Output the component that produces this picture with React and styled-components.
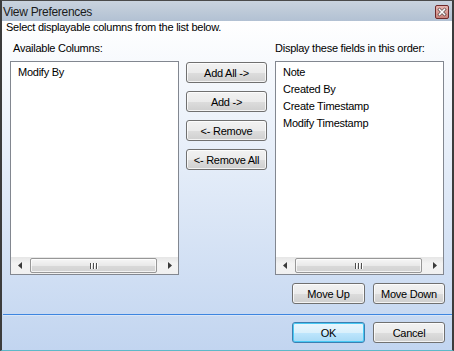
import React from 'react';
import styled, { createGlobalStyle } from 'styled-components';

const GlobalStyle = createGlobalStyle`
    body {
        margin: 0;
        font-family: "Liberation Sans", Arial, sans-serif;
    }
`;

const Window = styled.div`
    width: 454px;
    height: 351px;
    box-sizing: border-box;
    display: flex;
    flex-direction: column;
    border-top: 1px solid #4a4a4a;
    border-left: 2px solid #3c3c3c;
    border-right: 2px solid #3c3c3c;
    border-bottom: 1px solid #5fb8c8;
    box-shadow: inset -1px 0 0 #e8eef6, inset 0 -1px 0 #4a4a4a;
    font-size: 11px;
    letter-spacing: -0.25px;
    color: #000;
`;

const TitleBar = styled.div`
    height: 20px;
    flex: none;
    display: flex;
    align-items: center;
    justify-content: space-between;
    padding: 0 3px 0 1px;
    background: linear-gradient(#c9d3de, #b2c1d3);
`;

const Title = styled.span`
    font-size: 12px;
    letter-spacing: -0.3px;
    color: #1b1b1b;
    line-height: 14px;
    padding-top: 1px;
`;

const CloseButton = styled.div`
    width: 14px;
    height: 14px;
    display: flex;
    margin-top: 1px;
`;

const Body = styled.div`
    flex: 1;
    display: flex;
    flex-direction: column;
    background: linear-gradient(#ffffff, #c2d5f0);
`;

const Instruction = styled.div`
    line-height: 13px;
    padding-left: 4px;
`;

const Main = styled.div`
    display: grid;
    grid-template-columns: 169px 96px 169px;
    padding: 8px 0 0 8px;
`;

const Label = styled.div`
    line-height: 13px;
    padding-left: ${p => p.inset}px;
    margin-bottom: 6px;
    grid-row: 1;
    grid-column: ${p => p.col};
    white-space: nowrap;
`;

const ListBox = styled.div`
    grid-row: 2;
    grid-column: ${p => p.col};
    height: 214px;
    box-sizing: border-box;
    border: 1px solid #828790;
    background: #fff;
    display: flex;
    flex-direction: column;
`;

const Items = styled.div`
    flex: 1;
    padding: 2px 0 0 7px;
`;

const Item = styled.div`
    line-height: 17px;
    white-space: nowrap;
`;

const ScrollBar = styled.div`
    height: 17px;
    flex: none;
    display: flex;
    align-items: center;
    background: linear-gradient(#e6e6e6, #f3f3f3 40%, #f0f0f0);
`;

const Arrow = styled.div`
    width: 17px;
    height: 17px;
    display: flex;
    align-items: center;
    justify-content: center;
    flex: none;
`;

const Thumb = styled.div`
    flex: 1;
    height: 15px;
    margin: 0 4px 0 2px;
    box-sizing: border-box;
    border: 1px solid #979797;
    border-radius: 2px;
    background: linear-gradient(#f6f6f6, #e9e9e9 50%, #d9d9d9 51%, #d2d2d2);
    box-shadow: inset 0 0 0 1px rgba(255, 255, 255, 0.7);
    display: flex;
    align-items: center;
    justify-content: center;
    gap: 1px;
`;

const Grip = styled.span`
    width: 1px;
    height: 6px;
    background: #4d4d4d;
    border-right: 1px solid #fff;
`;

const ButtonColumn = styled.div`
    grid-row: 2;
    grid-column: 2;
    display: flex;
    flex-direction: column;
    gap: 8px;
    padding: 1px 8px 0 7px;
`;

const Button = styled.button`
    width: ${p => p.w || 81}px;
    height: 21px;
    box-sizing: border-box;
    padding: 0;
    margin: 0;
    font-family: inherit;
    font-size: 11px;
    letter-spacing: -0.25px;
    color: #000;
    border: 1px solid ${p => (p.primary ? '#3c7fb1' : '#707070')};
    border-radius: 3px;
    background: ${p =>
        p.primary
            ? 'linear-gradient(#eaf6fd, #d9f0fc 50%, #bee6fd 51%, #a7d9f5)'
            : 'linear-gradient(#f2f2f2, #ebebeb 50%, #dddddd 51%, #cfcfcf)'};
    box-shadow: inset 0 0 0 1px ${p => (p.primary ? '#48c9f4' : 'rgba(255,255,255,0.75)')};
    flex: none;
`;

const ActionRow = styled.div`
    grid-row: 3;
    grid-column: 3;
    display: flex;
    justify-content: flex-end;
    gap: 8px;
    margin: 8px -1px 0 0;
`;

const Separator = styled.div`
    height: 1px;
    margin: 10px 0 0 1px;
    background: #3d85e0;
    border-bottom: 1px solid #d8e6f8;
`;

const Footer = styled.div`
    display: flex;
    justify-content: flex-end;
    gap: 8px;
    padding: 6px 7px 0 0;
`;

const LeftTri = () => (
    <svg width="4" height="7" viewBox="0 0 4 7">
        <path d="M4 0 L0 3.5 L4 7 Z" fill="#3a3a3a" />
    </svg>
);

const RightTri = () => (
    <svg width="4" height="7" viewBox="0 0 4 7">
        <path d="M0 0 L4 3.5 L0 7 Z" fill="#3a3a3a" />
    </svg>
);

const HScroll = () => (
    <ScrollBar>
        <Arrow><LeftTri /></Arrow>
        <Thumb>
            <Grip />
            <Grip />
            <Grip />
        </Thumb>
        <Arrow><RightTri /></Arrow>
    </ScrollBar>
);

const available = ['Modify By'];
const display = ['Note', 'Created By', 'Create Timestamp', 'Modify Timestamp'];

export default function App() {
    return (
        <>
            <GlobalStyle />
            <Window>
                <TitleBar>
                    <Title>View Preferences</Title>
                    <CloseButton>
                        <svg width="14" height="14" viewBox="0 0 14 14">
                            <defs>
                                <linearGradient id="cb" x1="0" y1="0" x2="0" y2="1">
                                    <stop offset="0" stopColor="#e9b8b3" />
                                    <stop offset="1" stopColor="#c98079" />
                                </linearGradient>
                            </defs>
                            <rect x="0.5" y="0.5" width="13" height="13" rx="1.5" fill="url(#cb)" stroke="#6e2a2a" />
                            <path d="M4.5 4.5 L9.5 9.5 M9.5 4.5 L4.5 9.5" stroke="#5a4a4a" strokeWidth="3" strokeLinecap="square" />
                            <path d="M4.5 4.5 L9.5 9.5 M9.5 4.5 L4.5 9.5" stroke="#ffffff" strokeWidth="1.6" strokeLinecap="square" />
                        </svg>
                    </CloseButton>
                </TitleBar>
                <Body>
                    <Instruction>Select displayable columns from the list below.</Instruction>
                    <Main>
                        <Label col={1} inset={3}>Available Columns:</Label>
                        <Label col={3} inset={0}>Display these fields in this order:</Label>
                        <ListBox col={1}>
                            <Items>
                                {available.map(a => <Item key={a}>{a}</Item>)}
                            </Items>
                            <HScroll />
                        </ListBox>
                        <ButtonColumn>
                            <Button>Add All -&gt;</Button>
                            <Button>Add -&gt;</Button>
                            <Button>&lt;- Remove</Button>
                            <Button>&lt;- Remove All</Button>
                        </ButtonColumn>
                        <ListBox col={3}>
                            <Items>
                                {display.map(d => <Item key={d}>{d}</Item>)}
                            </Items>
                            <HScroll />
                        </ListBox>
                        <ActionRow>
                            <Button w={73}>Move Up</Button>
                            <Button w={72}>Move Down</Button>
                        </ActionRow>
                    </Main>
                    <Separator />
                    <Footer>
                        <Button w={73} primary>OK</Button>
                        <Button w={72}>Cancel</Button>
                    </Footer>
                </Body>
            </Window>
        </>
    );
}
